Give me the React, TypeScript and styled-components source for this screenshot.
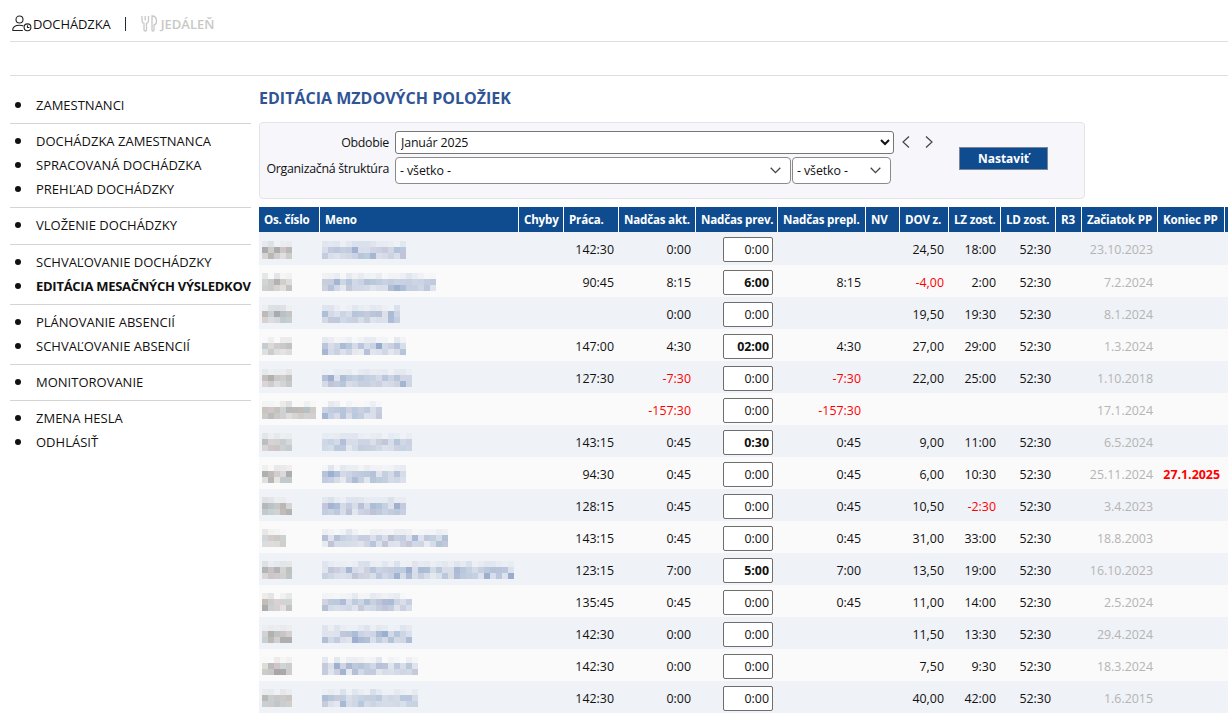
import React from "react";
import styled, { createGlobalStyle } from "styled-components";

const Global = createGlobalStyle`
  html, body { margin: 0; padding: 0; height: 718px; overflow: hidden; background: #fff; }
  body { font-family: "Open Sans", "Noto Sans", "Liberation Sans", sans-serif; font-size: 12.5px; color: #111; }
`;
const Page = styled.div`width: 1228px; height: 718px; overflow: hidden; display: flex; flex-direction: column;`;
const TopBar = styled.nav`
  margin-left: 10px; border-bottom: 1px solid #dedede;
  display: flex; align-items: center; padding: 6px 0 0 2px; box-sizing: border-box; height: 42px;
`;
const TopLink = styled.a<{ $off?: boolean }>`
  display: flex; align-items: center; gap: 1px; font-size: 13px; letter-spacing: ${p => (p.$off ? "-0.02px" : "-0.1px")};
  color: ${p => (p.$off ? "#c8c8c8" : "#111")}; font-weight: ${p => (p.$off ? 600 : 400)};
`;
const Sep = styled.span`width: 1px; height: 14px; background: #1c2a44; margin: 0 15px 0 14px;`;
const SubBar = styled.div`margin-left: 10px; height: 34px; box-sizing: border-box; border-bottom: 1px solid #dedede; flex: none;`;
const Body = styled.div`display: flex; flex: 1; min-height: 0;`;
const Side = styled.aside`width: 241px; margin-left: 10px; flex: none; padding-top: 17px;`;
const Group = styled.ul`
  list-style: none; margin: 0; padding: 0 0 6.2px; border-bottom: 1px solid #d4d4d4; margin-bottom: 5px;
  &:last-child { border-bottom: 0; }
`;
const Item = styled.li<{ $active?: boolean }>`
  height: 24px; line-height: 24px; padding-left: 26px; position: relative; white-space: nowrap;
  font-size: 13px; letter-spacing: ${p => (p.$active ? "-0.27px" : "0")}; font-weight: ${p => (p.$active ? 700 : 400)};
  &::before { content: ""; position: absolute; left: 5px; top: 9px; width: 6px; height: 6px; border-radius: 50%; background: #111; }
`;
const Main = styled.main`margin-left: 8px; flex: none; width: 969px; padding-top: 12px;`;
const Title = styled.h1`margin: 0 0 14px; font-size: 16px; line-height: 20px; font-weight: 700; color: #2f5597; letter-spacing: 0.01px;`;
const Filter = styled.form`
  width: 826px; height: 77px; box-sizing: border-box; background: #f6f6fb; border: 1px solid #e3e3ec; border-radius: 4px;
  display: grid; grid-template-columns: 129px 499px 1fr; column-gap: 6px; row-gap: 3px;
  padding: 8px 0 0 0; grid-template-rows: 23px 27px; align-content: start; margin-bottom: 8px;
`;
const Label = styled.label`text-align: right; line-height: 23px; font-size: 12.4px; letter-spacing: -0.3px; white-space: nowrap;`;
const PeriodSelect = styled.select`
  width: 499px; height: 23px; box-sizing: border-box; font: inherit; font-size: 12.4px; letter-spacing: -0.15px; background: #fff; color: #111;
  border: 1px solid #767676; border-radius: 3px; padding: 0 0 0 1px;
`;
const Arrows = styled.div`display: flex; align-items: center; gap: 13px; padding-left: 1px; height: 22px; color: #444;`;
const SelectRow = styled.div`display: flex; gap: 1px;`;
const SelectWrap = styled.div<{ $w: number }>`position: relative; width: ${p => p.$w}px; height: 27px;`;
const StyledSelect = styled.select`
  appearance: none; width: 100%; height: 100%; box-sizing: border-box; font: inherit; font-size: 12.4px; letter-spacing: -0.1px;
  background: #fff; color: #111; border: 1px solid #8a8a8a; border-radius: 4px; padding: 0 4px;
`;
const Chevron = styled.svg`position: absolute; right: 10px; top: 10px; pointer-events: none;`;
const ActionCell = styled.div`position: relative;`;
const SetButton = styled.button`
  position: absolute; left: 59px; top: -10px; width: 89px; height: 23px; box-sizing: border-box;
  background: #0f4c8f; color: #fff; border: 1px solid #7a8696; font: inherit; font-size: 12px; font-weight: 700; padding: 0;
`;
const Table = styled.table`border-collapse: separate; border-spacing: 0; table-layout: fixed; width: 990px;`;
const Th = styled.th<{ $w: number }>`
  width: ${p => p.$w}px; height: 25px; box-sizing: border-box; background: #0f4c8f; color: #fff; text-align: left;
  font-size: 11.6px; font-weight: 700; padding: 0 0 0 5px; border-right: 1px solid #fff; white-space: nowrap; overflow: hidden; letter-spacing: -0.2px;
`;
const Tr = styled.tr<{ $odd: boolean }>`
  background: ${p => (p.$odd ? "#eff2f6" : "#fafafa")};
  &:first-child > td { height: 33px; }
`;
const Td = styled.td<{ $red?: boolean; $muted?: boolean; $strong?: boolean; $pad?: number }>`
  height: 32px; box-sizing: border-box; padding: 2px ${p => p.$pad ?? 5}px 0 0; text-align: right; white-space: nowrap; font-size: 12.4px;
  color: ${p => (p.$red ? "#f00" : p.$muted ? "#b4b4b4" : "#111")};
  font-weight: ${p => (p.$strong ? 700 : 400)}; overflow: hidden;
`;
const MosaicCell = styled.td<{ $left: number }>`
  height: 32px; box-sizing: border-box; padding: 2px 0 0 ${p => p.$left}px; vertical-align: middle; line-height: 0;
`;
const TimeInput = styled.input<{ $bold?: boolean }>`
  width: 50px; height: 25px; box-sizing: border-box; text-align: right; padding: 0 3px 0 0; font: inherit; font-size: 12.4px;
  font-weight: ${p => (p.$bold ? 700 : 400)}; border: 1px solid #6e6e6e; border-radius: 2px; background: #fff; color: #111; vertical-align: middle;
`;

function Mosaic({ width, seed, blue }: { width: number; seed: number; blue: boolean }) {
  let s = seed * 7919 + 13;
  const rnd = () => { s = (s * 1103515245 + 12345) & 0x7fffffff; return ((s >> 8) % 1000) / 1000; };
  const cells: React.ReactElement[] = [];
  const warm = ["#b9b3ae", "#c9bcc0", "#a9aaa9", "#b4bfc2", "#9a9a9c", "#c8c6c2"];
  const cool = ["#c4cde0", "#a8b7d2", "#b6c2d8", "#95a8cb", "#d2d8e6", "#a9bcd4", "#bcc0d4"];
  const pal = blue ? cool : warm;
  for (let r = 0; r < 3; r++) {
    for (let x = 0; x < width; x += 6) {
      const c = pal[Math.floor(rnd() * pal.length)];
      const o = r === 1 ? 0.55 + rnd() * 0.45 : r === 2 ? 0.35 + rnd() * 0.6 : rnd() * 0.3;
      cells.push(<rect key={`${r}-${x}`} x={x} y={r * 6} width={6} height={6} fill={c} opacity={o} />);
    }
  }
  return (
    <svg width={width} height={18} shapeRendering="crispEdges" style={{ display: "block" }}>
      {cells}
    </svg>
  );
}

const cols = [
  ["Os. číslo", 61], ["Meno", 199], ["Chyby", 45], ["Práca.", 55], ["Nadčas akt.", 77], ["Nadčas prev.", 82],
  ["Nadčas prepl.", 88], ["NV", 34], ["DOV z.", 49], ["LZ zost.", 52], ["LD zost.", 55], ["R3", 26],
  ["Začiatok PP", 76], ["Koniec PP", 67], ["", 24],
] as const;

type Row = [number, number, string, string, string, string, string, string, string, string, string?];
const rows: Row[] = [
  [30, 84, "142:30", "0:00", "0:00", "", "24,50", "18:00", "52:30", "23.10.2023"],
  [30, 114, "90:45", "8:15", "6:00", "8:15", "-4,00", "2:00", "52:30", "7.2.2024"],
  [30, 78, "", "0:00", "0:00", "", "19,50", "19:30", "52:30", "8.1.2024"],
  [30, 84, "147:00", "4:30", "02:00", "4:30", "27,00", "29:00", "52:30", "1.3.2024"],
  [30, 90, "127:30", "-7:30", "0:00", "-7:30", "22,00", "25:00", "52:30", "1.10.2018"],
  [54, 60, "", "-157:30", "0:00", "-157:30", "", "", "", "17.1.2024"],
  [30, 90, "143:15", "0:45", "0:30", "0:45", "9,00", "11:00", "52:30", "6.5.2024"],
  [30, 84, "94:30", "0:45", "0:00", "0:45", "6,00", "10:30", "52:30", "25.11.2024", "27.1.2025"],
  [30, 84, "128:15", "0:45", "0:00", "0:45", "10,50", "-2:30", "52:30", "3.4.2023"],
  [24, 126, "143:15", "0:45", "0:00", "0:45", "31,00", "33:00", "52:30", "18.8.2003"],
  [30, 192, "123:15", "7:00", "5:00", "7:00", "13,50", "19:00", "52:30", "16.10.2023"],
  [30, 90, "135:45", "0:45", "0:00", "0:45", "11,00", "14:00", "52:30", "2.5.2024"],
  [30, 90, "142:30", "0:00", "0:00", "", "11,50", "13:30", "52:30", "29.4.2024"],
  [30, 96, "142:30", "0:00", "0:00", "", "7,50", "9:30", "52:30", "18.3.2024"],
  [30, 96, "142:30", "0:00", "0:00", "", "40,00", "42:00", "52:30", "1.6.2015"],
];
const isNeg = (v: string) => v.startsWith("-");
const isBold = (v: string) => v !== "0:00";

const ChevronIcon = () => (
  <Chevron width="11" height="7" viewBox="0 0 11 7" fill="none" stroke="#444" strokeWidth="1.3">
    <path d="M.7.8 5.500 5.600 10.300.8" />
  </Chevron>
);

export default function App() {
  return (
    <Page>
      <Global />
      <TopBar>
        <TopLink>
          <svg width="20" height="17" viewBox="0 0 20 17" fill="none" stroke="#222" strokeWidth="1.1">
            <circle cx="7.500" cy="4.500" r="3.500" />
            <path d="M.6 15.500c0-3.400 2.800-5.300 6.900-5.300 1.500 0 2.800.3 3.900.8M.6 15.500h10.200" />
            <circle cx="15.500" cy="12.300" r="3.400" />
            <path d="M15.500 10.300v2.200h1.900" />
          </svg>
          DOCHÁDZKA
        </TopLink>
        <Sep />
        <TopLink $off>
          <svg width="18" height="17" viewBox="0 0 18 17" fill="none" stroke="#c8c8c8" strokeWidth="1.3" style={{ marginRight: 1 }}>
            <path d="M1 1v4.500C1 7 2 8 3 8.300V15c0 1.300 2.500 1.300 2.500 0V8.300C6.500 8 7.500 7 7.500 5.500V1M4.200 1v4.500" />
            <path d="M11 1c2.800 0 4.500 2.200 4.500 5s-1.200 3.800-2.500 4v5c0 1.300-2 1.300-2 0z" />
          </svg>
          JEDÁLEŇ
        </TopLink>
      </TopBar>
      <SubBar />
      <Body>
        <Side>
          <Group><Item>ZAMESTNANCI</Item></Group>
          <Group>
            <Item>DOCHÁDZKA ZAMESTNANCA</Item>
            <Item>SPRACOVANÁ DOCHÁDZKA</Item>
            <Item>PREHĽAD DOCHÁDZKY</Item>
          </Group>
          <Group><Item>VLOŽENIE DOCHÁDZKY</Item></Group>
          <Group>
            <Item>SCHVAĽOVANIE DOCHÁDZKY</Item>
            <Item $active>EDITÁCIA MESAČNÝCH VÝSLEDKOV</Item>
          </Group>
          <Group>
            <Item>PLÁNOVANIE ABSENCIÍ</Item>
            <Item>SCHVAĽOVANIE ABSENCIÍ</Item>
          </Group>
          <Group><Item>MONITOROVANIE</Item></Group>
          <Group>
            <Item>ZMENA HESLA</Item>
            <Item>ODHLÁSIŤ</Item>
          </Group>
        </Side>
        <Main>
          <Title>EDITÁCIA MZDOVÝCH POLOŽIEK</Title>
          <Filter>
            <Label>Obdobie</Label>
            <PeriodSelect defaultValue="1"><option value="1">Január 2025</option></PeriodSelect>
            <Arrows>
              <svg width="10" height="14" viewBox="0 0 10 14" fill="none" stroke="#444" strokeWidth="1.2"><path d="M8 1.500 2 7l6 5.500" /></svg>
              <svg width="10" height="14" viewBox="0 0 10 14" fill="none" stroke="#444" strokeWidth="1.2"><path d="M2 1.500 8 7l-6 5.500" /></svg>
            </Arrows>
            <Label>Organizačná štruktúra</Label>
            <SelectRow>
              <SelectWrap $w={396}>
                <StyledSelect><option>- všetko -</option></StyledSelect>
                <ChevronIcon />
              </SelectWrap>
              <SelectWrap $w={99}>
                <StyledSelect><option>- všetko -</option></StyledSelect>
                <ChevronIcon />
              </SelectWrap>
            </SelectRow>
            <ActionCell>
              <SetButton type="button">Nastaviť</SetButton>
            </ActionCell>
          </Filter>
          <Table>
            <colgroup>{cols.map(([, w], i) => <col key={i} width={w} />)}</colgroup>
            <thead>
              <tr>{cols.map(([n, w], i) => <Th key={i} $w={w}>{n}</Th>)}</tr>
            </thead>
            <tbody>
              {rows.map((r, i) => (
                <Tr key={i} $odd={i % 2 === 0}>
                  <MosaicCell $left={3}><Mosaic width={r[0]} seed={i + 1} blue={false} /></MosaicCell>
                  <MosaicCell $left={2}><Mosaic width={r[1]} seed={i + 101} blue /></MosaicCell>
                  <Td />
                  <Td>{r[2]}</Td>
                  <Td $red={isNeg(r[3])}>{r[3]}</Td>
                  <Td $pad={5}><TimeInput readOnly value={r[4]} $bold={isBold(r[4])} /></Td>
                  <Td $red={isNeg(r[5])}>{r[5]}</Td>
                  <Td />
                  <Td $red={isNeg(r[6])}>{r[6]}</Td>
                  <Td $red={isNeg(r[7])}>{r[7]}</Td>
                  <Td>{r[8]}</Td>
                  <Td />
                  <Td $muted>{r[9]}</Td>
                  <Td $red $strong>{r[10] ?? ""}</Td>
                  <Td />
                </Tr>
              ))}
            </tbody>
          </Table>
        </Main>
      </Body>
    </Page>
  );
}
